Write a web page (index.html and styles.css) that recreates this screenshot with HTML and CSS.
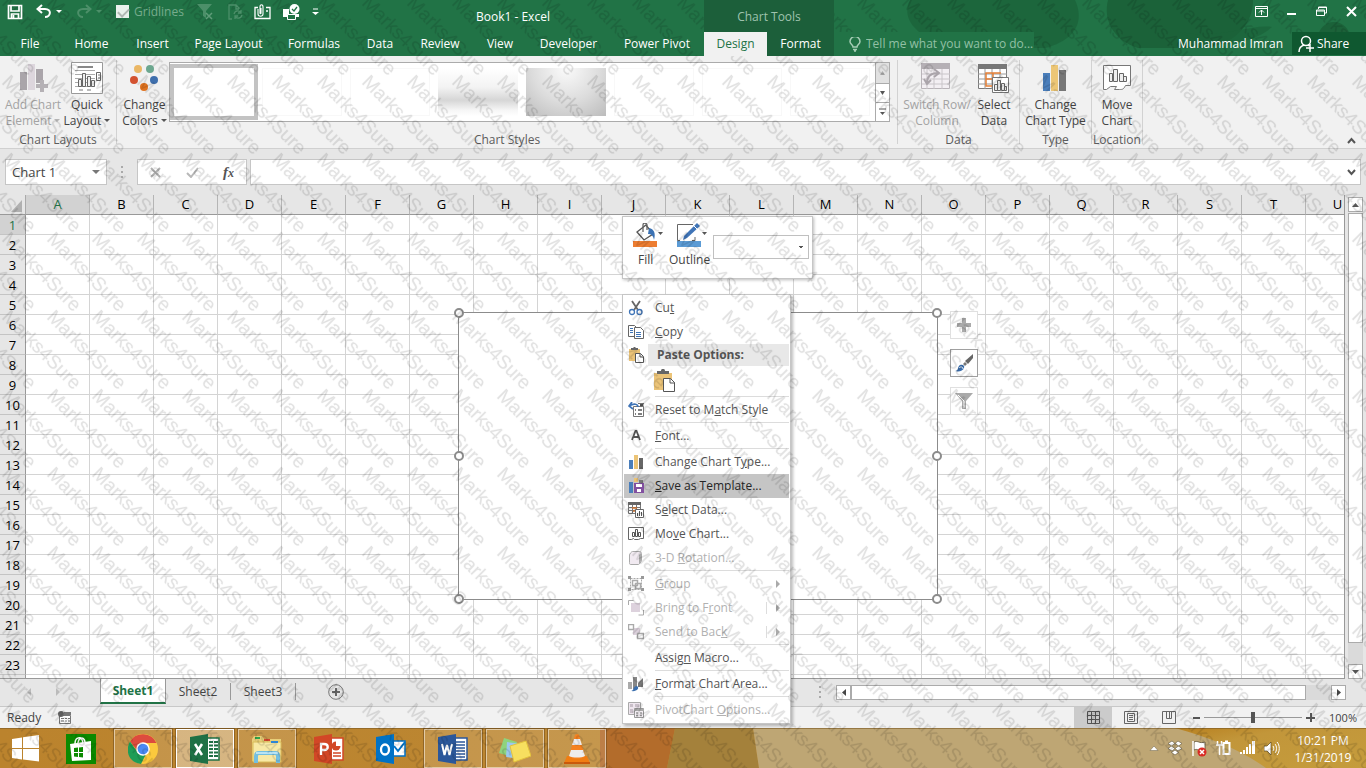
FILE: index.html
```html
<!DOCTYPE html>
<html lang="en">
<head>
<meta charset="utf-8">
<title>Book1 - Excel</title>
<link rel="stylesheet" href="styles.css">
</head>
<body>
<div class="desktop">
  <header class="top">
    <div class="titlebar">
      <div class="qat">
        <button aria-label="Save"><svg width="16" height="16" viewBox="0 0 16 16"><path d="M1.5 1.5h13v13h-13zM4 2v5h8V2M4.500 14v-4h7v4M6.500 11v3" fill="none" stroke="#fff" stroke-width="1.700"/></svg></button>
        <button aria-label="Undo" class="undo"><svg width="26" height="16" viewBox="0 0 26 16"><path d="M6 1 1.500 5 6 9M2 5h7c7 0 6 8 0 8" fill="none" stroke="#fff" stroke-width="2"/><path d="M20 6h6l-3 3z" fill="#fff"/></svg></button>
        <button aria-label="Redo" class="redo"><svg width="26" height="16" viewBox="0 0 26 16"><path d="m10 1 4.500 4L10 9M14 5H7c-7 0-6 8 0 8" fill="none" stroke="#4c8f69" stroke-width="2"/><path d="M20 6h6l-3 3z" fill="#4c8f69"/></svg></button>
        <label class="gridlines"><input type="checkbox" checked disabled>Gridlines</label>
        <button aria-label="Clear filter" class="q4"><svg width="17" height="16" viewBox="0 0 17 16"><path d="M0 0h15L9 7v7l-3-2V7z" fill="#4c8f69"/><path d="m9 9 6 6m0-6-6 6" stroke="#5f9c79" stroke-width="1.500"/></svg></button>
        <button aria-label="Refresh" class="q5"><svg width="16" height="16" viewBox="0 0 16 16"><path d="M4 15H1V1h7l3 3v1M8 1v4h3M6 10c1-4 6-4 7-1m0-3v3h-3m4 2c-1 4-6 4-7 1m0 3v-3h3" fill="none" stroke="#4c8f69" stroke-width="1.300"/></svg></button>
        <button aria-label="Attach" class="q6"><svg width="17" height="16" viewBox="0 0 17 16"><path d="M4 3.500H1v11h15v-11h-4M12 7h2" fill="none" stroke="#fff" stroke-width="1.300"/><path d="M4 5v5c0 3 5 3 5 0V3c0-3-3-3-3 0v6c0 1 1 1 1 0V4" fill="none" stroke="#fff" stroke-width="1.100"/></svg></button>
        <button aria-label="Print" class="q7"><svg width="17" height="16" viewBox="0 0 17 16"><path d="M0 5h6v5h10v3h-3v-2H4v2H0z" fill="#fff"/><path d="M4.500 10.500h8v5h-8z" fill="#217346" stroke="#fff"/><circle cx="11.500" cy="5" r="5" fill="#fff"/><path d="m9 5 2 2 3-4" fill="none" stroke="#217346" stroke-width="1.300"/></svg></button>
        <button aria-label="Customize" class="q8"><svg width="7" height="8" viewBox="0 0 7 8"><path d="M1 1h5" stroke="#fff"/><path d="M0 4h7L3.500 7z" fill="#fff"/></svg></button>
      </div>
      <h1>Book1 - Excel</h1>
      <div class="wincontrols">
        <button aria-label="Ribbon options"><svg width="13" height="11" viewBox="0 0 13 11"><path d="M.5.5h12v10H.5zM.5 2.500h12M6.500 9V4M4 6.500 6.500 4 9 6.500" fill="none" stroke="#fff"/></svg></button>
        <button aria-label="Minimize"><svg width="10" height="11" viewBox="0 0 10 11"><path d="M0 8h9" stroke="#fff" stroke-width="2"/></svg></button>
        <button aria-label="Restore"><svg width="11" height="11" viewBox="0 0 11 11"><path d="M2.500 3V1h8v6h-2M.5 4h8v5.500h-8zM.5 5h8M2.500 1.500h8" fill="none" stroke="#fff"/></svg></button>
        <button aria-label="Close"><svg width="11" height="11" viewBox="0 0 11 11"><path d="m1 1 9 9m0-9-9 9" stroke="#fff" stroke-width="2"/></svg></button>
      </div>
    </div>
    <svg class="art" width="486" height="56" viewBox="0 0 486 56"><g fill="#1b6239"><path d="M30 0h165c10 22 0 40-30 48H78C38 40 20 20 30 0z" opacity=".75"/><path d="M228 0h145c0 22-15 42-45 48h-70c-25-8-35-28-30-48z"/><circle cx="454" cy="38" r="16"/><path d="M300 32c40 8 70-8 92-5-20 18-60 24-92 5z" opacity=".7"/></g></svg>
    <nav class="tabs">
      <div class="tablist">
        <button>File</button><button>Home</button><button>Insert</button><button>Page Layout</button><button>Formulas</button><button>Data</button><button>Review</button><button>View</button><button>Developer</button><button>Power Pivot</button>
      </div>
      <div class="tools">
        <div class="toolstitle">Chart Tools</div>
        <div class="toolstabs"><button class="active">Design</button><button>Format</button></div>
      </div>
      <label class="tell"><svg width="12" height="15" viewBox="0 0 12 15"><path d="M4 10C4 8 1 7 1 4.500a4.500 4.500 0 0 1 10 0C11 7 8 8 8 10zM4 12.500h4M5 14h2" fill="none" stroke="#a5cdb5" stroke-width="1.500"/></svg><input type="text" aria-label="Tell me" placeholder="Tell me what you want to do..."></label>
      <span class="user">Muhammad Imran</span>
      <button class="share"><svg width="17" height="18" viewBox="0 0 17 18"><circle cx="8" cy="6" r="4.500" fill="none" stroke="#fff" stroke-width="1.500"/><path d="M1 17c0-4 2-6 5-7m4 0 1 1M8 13h8m-4-4v8" fill="none" stroke="#fff" stroke-width="1.500"/></svg>Share</button>
    </nav>
  </header>

  <section class="ribbon">
    <div class="group g-layouts">
      <div class="items">
        <button class="big off"><svg width="32" height="32" viewBox="0 0 32 32"><path d="M3 10h7v18H3zM19 7h7v14h-7z" fill="#aaa5aa"/><path d="M11 2h7v26h-7z" fill="#ddd6dd"/><path d="M23 18h4v4h4v4h-4v4h-4v-4h-4v-4h4z" fill="#b5b1b5"/></svg><span>Add Chart<br>Element<i class="caret"></i></span></button>
        <button class="big"><svg width="32" height="32" viewBox="0 0 32 32"><path d="M.5.500h31v31H.5z" fill="#fff" stroke="#999"/><path d="M6 5h16M4 8.500h20M4 12.500h20M4 16.500h20M4 20.500h20M4 24.500h20" stroke="#aaa" stroke-width="1"/><path d="M7 5h15" stroke="#888" stroke-width="2"/><path d="M7.500 17.500h3v7h-3zM11.500 11.500h3v13h-3zM16.500 14.500h3v10h-3zM20.500 18.500h3v6h-3z" fill="#eee" stroke="#666"/><path d="M25.500 10.500h4v8h-4z" fill="#fff" stroke="#666"/><path d="M27 13h2m-2 3h2M8 28h4m4 0h4" stroke="#777"/></svg><span>Quick<br>Layout<i class="caret"></i></span></button>
      </div>
      <h2>Chart Layouts</h2>
    </div>
    <div class="group g-styles">
      <div class="items">
        <button class="big colors"><svg width="32" height="32" viewBox="0 0 32 32"><circle cx="9" cy="7" r="4" fill="#eab765"/><circle cx="21" cy="7" r="4" fill="#6ca78f"/><circle cx="5" cy="18" r="4" fill="#d35230"/><circle cx="25" cy="18" r="4" fill="#3f6fad"/><circle cx="15" cy="25" r="4" fill="#e07320"/></svg><span>Change<br>Colors<i class="caret"></i></span></button>
        <div class="gallery">
          <div class="swatches"><i class="sw sel"></i><i class="sw"></i><i class="sw"></i><i class="sw fade"></i><i class="sw radial"></i><i class="sw"></i><i class="sw"></i><i class="sw"></i></div>
          <div class="scroller">
            <button class="dis" aria-label="Up"><svg width="5" height="4" viewBox="0 0 5 4"><path d="M0 4h5L2.500 0z" fill="#aaa"/></svg></button>
            <button aria-label="Down"><svg width="5" height="4" viewBox="0 0 5 4"><path d="M0 0h5L2.500 4z" fill="#555"/></svg></button>
            <button aria-label="More"><svg width="7" height="8" viewBox="0 0 7 8"><path d="M0 1h7" stroke="#555"/><path d="M1 4h5L3.500 7z" fill="#555"/></svg></button>
          </div>
        </div>
      </div>
      <h2>Chart Styles</h2>
    </div>
    <div class="group g-data">
      <div class="items">
        <button class="big off"><svg width="32" height="32" viewBox="0 0 32 32"><path d="M.5 2.500h28v24h-28z" fill="#f3eff3" stroke="#b9b4b9"/><path d="M0 1h29v6H0z" fill="#b5b0b5"/><path d="M6 7v20m7-20v20m8-20v20M1 12h28M1 17h28M1 22h28" stroke="#c9c5c9"/><path d="M6 21c0-7 4-10 11-10M13 7l5 4-5 4M3 17l3 5 4-4" fill="none" stroke="#aaa4aa" stroke-width="2"/></svg><span>Switch Row/<br>Column</span></button>
        <button class="big"><svg width="32" height="32" viewBox="0 0 32 32"><path d="M.5 2.500h28v24h-28z" fill="#fff" stroke="#7a7a7a"/><path d="M0 2h29v5H0z" fill="#777"/><path d="M7 7v20m7-20v20m8-20v20M0 12h29M0 17h29M0 22h29" stroke="#999"/><path d="M23 11H8v13h6M8 17h7M15 11v6" fill="none" stroke="#e58037" stroke-width="1.500"/><path d="M14.500 15.500h16v15h-16z" fill="#fff" stroke="#777"/><path d="M16.500 22.500h3v6h-3zM19.500 18.500h3v10h-3zM23.500 21.500h3v7h-3zM26.500 24.500h2v4h-2z" fill="#eee" stroke="#666"/></svg><span>Select<br>Data</span></button>
      </div>
      <h2>Data</h2>
    </div>
    <div class="group g-type">
      <div class="items">
        <button class="big"><svg width="32" height="32" viewBox="0 0 32 32"><path d="M3 11h7v18H3z" fill="#4a7ebb"/><path d="M11 3h7v26h-7z" fill="#ecc676"/><path d="M19 8h7v21h-7z" fill="#777"/></svg><span>Change<br>Chart Type</span></button>
      </div>
      <h2>Type</h2>
    </div>
    <div class="group g-loc">
      <div class="items">
        <button class="big"><svg width="32" height="32" viewBox="0 0 32 32"><path d="M2.500 3.500h27v20h-5c-2 4-3 4-6 4h-5l2-3h-6l-4 3h-3z" fill="#fff" stroke="#777"/><path d="M8.500 11.500h3v8h-3zM12.500 7.500h4v12h-4zM18.500 11.500h4v8h-4zM22.500 14.500h3v5h-3z" fill="#eee" stroke="#666"/></svg><span>Move<br>Chart</span></button>
      </div>
      <h2>Location</h2>
    </div>
    <button class="collapse" aria-label="Collapse ribbon"><svg width="9" height="7" viewBox="0 0 9 7"><path d="M1 6l3.500-4L8 6" fill="none" stroke="#555" stroke-width="2"/></svg></button>
  </section>

  <section class="formula">
    <div class="namebox"><input type="text" value="Chart 1" aria-label="Name box"><i class="caret"></i></div>
    <i class="dots"></i>
    <div class="fx">
      <button aria-label="Cancel"><svg width="11" height="11" viewBox="0 0 11 11"><path d="m1 1 9 9m0-9-9 9" stroke="#b0b0b0" stroke-width="2"/></svg></button>
      <button aria-label="Enter"><svg width="13" height="11" viewBox="0 0 13 11"><path d="m1 6 4 4 7-9" fill="none" stroke="#b8b8b8" stroke-width="2"/></svg></button>
      <button class="fxb"><em>f</em><sub>x</sub></button>
    </div>
    <div class="fbox"><input type="text" aria-label="Formula bar"><svg width="9" height="7" viewBox="0 0 9 7"><path d="M1 1l3.500 4L8 1" fill="none" stroke="#555" stroke-width="2"/></svg></div>
  </section>

  <main class="sheet">
    <div class="gridwrap">
      <table class="cells"><thead><tr id="heads"><th class="corner"><svg width="11" height="12" viewBox="0 0 11 12"><path d="M11 0v12H0z" fill="#b0b0b0"/></svg></th></tr></thead><tbody id="rows"></tbody></table>
      <div class="chart">
        <i class="h tl"></i><i class="h tr"></i><i class="h ml"></i><i class="h mr"></i><i class="h bl"></i><i class="h br"></i>
      </div>
      <div class="chartbtns">
        <button aria-label="Chart elements"><svg width="20" height="20" viewBox="0 0 20 20"><path d="M8 3h4v5h5v4h-5v5H8v-5H3V8h5z" fill="#aaa"/></svg></button>
        <button class="on" aria-label="Chart styles"><svg width="20" height="20" viewBox="0 0 20 20"><path d="M19 1v4l-5 6-3-3z" fill="#666"/><path d="m11 9 2 2-2 2-2-2z" fill="#777"/><path d="M1 18c4 0 2-4 5-6 3-1 5 1 4 3-1 3-5 4-9 3z" fill="#3b6fae"/><path d="M5 15c2-2 4-1 4 1" stroke="#fff" fill="none"/></svg></button>
        <button aria-label="Chart filters"><svg width="20" height="20" viewBox="0 0 20 20"><path d="M1 2h18l-7 8v8H8v-8z" fill="#aaa"/><path d="M4 4l6 6v7" fill="none" stroke="#fff"/></svg></button>
      </div>
    </div>
    <div class="vscroll">
      <button aria-label="Scroll up"><svg width="7" height="4" viewBox="0 0 7 4"><path d="M0 4h7L3.500 0z" fill="#555"/></svg></button>
      <i class="vthumb"></i><i class="vtrack"></i>
      <button aria-label="Scroll down"><svg width="7" height="4" viewBox="0 0 7 4"><path d="M0 0h7L3.500 4z" fill="#555"/></svg></button>
    </div>
  </main>

  <footer class="sheettabs">
    <div class="arrows"><svg width="4" height="8" viewBox="0 0 4 8"><path d="M4 0v8L0 4z" fill="#bbb"/></svg><svg width="4" height="8" viewBox="0 0 4 8"><path d="M0 0v8l4-4z" fill="#bbb"/></svg></div>
    <button class="tab cur">Sheet1</button><button class="tab">Sheet2</button><button class="tab">Sheet3</button>
    <button class="add" aria-label="New sheet"><svg width="16" height="16" viewBox="0 0 16 16"><circle cx="8" cy="8" r="7.300" fill="none" stroke="#777"/><path d="M8 4v8M4 8h8" stroke="#666" stroke-width="2"/></svg></button>
    <i class="dots hdots"></i>
    <div class="hscroll">
      <button aria-label="Scroll left"><svg width="4" height="7" viewBox="0 0 4 7"><path d="M4 0v7L0 3.500z" fill="#444"/></svg></button>
      <i class="hthumb"></i><i class="htrack"></i>
      <button aria-label="Scroll right"><svg width="4" height="7" viewBox="0 0 4 7"><path d="M0 0v7l4-3.500z" fill="#444"/></svg></button>
    </div>
  </footer>

  <div class="status">
    <span>Ready</span>
    <svg class="macro" width="14" height="13" viewBox="0 0 14 13"><path d="M1.500 4.500h11v8h-11z" fill="#fff" stroke="#777"/><path d="M6 1h7v3H6z" fill="#777"/><circle cx="3" cy="3" r="3" fill="#666"/><path d="M3 7.500h3m1 0h2m1 0h2M3 10h3m1 0h2m1 0h2" stroke="#777"/></svg>
    <div class="views">
      <button class="on" aria-label="Normal"><svg width="13" height="13" viewBox="0 0 13 13"><path d="M.5.500h12v12H.5zM4.500 0v13M8.500 0v13M0 4.500h13M0 8.500h13" fill="none" stroke="#555"/></svg></button>
      <button aria-label="Page layout"><svg width="14" height="13" viewBox="0 0 14 13"><path d="M.5.500h13v12H.5zM3.500 2.500h7v8h-7zM5 4.500h4M5 6.500h4M5 8.500h4" fill="none" stroke="#666"/></svg></button>
      <button aria-label="Page break"><svg width="14" height="13" viewBox="0 0 14 13"><path d="M.5.500h13v12H.5zM4.500 0v7.500h5V0M7.500 0v7" fill="none" stroke="#666"/></svg></button>
    </div>
    <div class="zoom"><b class="minus"></b><input type="range" min="0" max="100" value="50" aria-label="Zoom"><b class="plus"></b></div>
    <span class="pct">100%</span>
  </div>

  <div class="taskbar">
    <svg class="wall" viewBox="0 0 1366 40" preserveAspectRatio="none">
      <defs><linearGradient id="w1"><stop offset="0" stop-color="#bb832d"/><stop offset=".8" stop-color="#bd8a36"/><stop offset="1" stop-color="#b2702b"/></linearGradient><linearGradient id="w2" x2="1" y2="1"><stop offset="0" stop-color="#b8801f"/><stop offset=".3" stop-color="#c2963a"/><stop offset="1" stop-color="#c59c3c"/></linearGradient></defs>
      <path d="M0 0h1366v40H0z" fill="url(#w1)"/><path d="M600 0h75l-8 40h-67z" fill="#b36c2b"/><path d="M675 0h78l6 40h-92z" fill="#a4813b"/><path d="M753 0h450l100 40H759z" fill="#bea674"/><path d="M1175 0h191v40h-100c-25-18-55-30-91-40z" fill="url(#w2)"/><path d="M0 .5h1366" stroke="#7c5a25" opacity=".6"/>
    </svg>
    <button class="app start" aria-label="Start"><svg width="28" height="28" viewBox="0 0 28 28"><path d="m1 4 10-1.500V13H1zM12 2.300 28 0v13H12zM1 14h10v10.500L1 23zM12 14h16v12.500l-16-2z" fill="#fff"/></svg></button>
    <button class="app" aria-label="Store"><svg width="30" height="30" viewBox="0 0 30 30"><path d="M0 0h30v30H0z" fill="#0b8a00"/><path d="M4 10l21-3v19L6 27z" fill="#fff"/><path d="M9 10c0-8 7-8 8-1m-5 0c1-7 6-6 7-1" fill="none" stroke="#fff" stroke-width="1.500"/><path d="m8 14 4-.5V18H8zM13 13.400l4-.5V18h-4zM8 19h4v4l-4-.5zM13 19h4v4.500l-4-.5z" fill="#0b8a00"/></svg></button>
    <button class="app run" aria-label="Chrome"><svg width="30" height="30" viewBox="0 0 30 30"><circle cx="15" cy="15" r="15" fill="#fbc93d"/><path d="M2 7.500A15 15 0 0 1 28.500 9H15a6 6 0 0 0-5.500 8z" fill="#dd4b3e"/><path d="M2 7.500 9.500 18c2 3 5 3.500 8 3L13 30C0 28-3 16 2 7.500z" fill="#1e9d57"/><circle cx="15" cy="15" r="6.800" fill="#fff"/><circle cx="15" cy="15" r="5.300" fill="#4a8af4"/></svg></button>
    <button class="app run cur" aria-label="Excel"><svg width="30" height="30" viewBox="0 0 30 30"><path d="M15 4h14v22H15z" fill="#fff" stroke="#1f7145" stroke-width="1.500"/><path d="M19 8h4m1 0h4M19 11.500h4m1 0h4M19 15h4m1 0h4M19 18.500h4m1 0h4M19 22h4m1 0h4" stroke="#1f7145" stroke-width="1.800"/><path d="m0 3 18-3v30L0 27z" fill="#1f7145"/><path d="m5 10 7 11m0-11L5 21" stroke="#fff" stroke-width="2.500"/></svg></button>
    <button class="app run" aria-label="File Explorer"><svg width="32" height="30" viewBox="0 0 32 30"><path d="M1 5 3 2h8l2 3h17v22H1z" fill="#e8cf79"/><path d="M2 8h28v20H2z" fill="#f8e9a5" stroke="#d8bb5b"/><path d="M4 3h5v2H4z" fill="#2da44a"/><path d="M13 5h6v2h-6z" fill="#d2472f"/><path d="M20 7h7v2h-7z" fill="#2e86d6"/><path d="M5 29v-7c0-2 1-3 3-3h16c2 0 3 1 3 3v7" fill="none" stroke="#74bfe0" stroke-width="4"/><path d="M5 19h22" stroke="#b8e3f5" stroke-width="2"/></svg></button>
    <button class="app" aria-label="PowerPoint"><svg width="30" height="30" viewBox="0 0 30 30"><path d="M15 4h14v22H15z" fill="#fff" stroke="#d24726" stroke-width="1.500"/><circle cx="22" cy="12" r="4.500" fill="#d24726"/><path d="M22 12V7h5v5z" fill="#fff"/><path d="M19 19h8m-8 3h8" stroke="#d24726" stroke-width="1.500"/><path d="m0 3 18-3v30L0 27z" fill="#d24726"/><path d="M7 21V10h3c5 0 5 6 0 6H7" fill="none" stroke="#fff" stroke-width="2.300"/></svg></button>
    <button class="app" aria-label="Outlook"><svg width="30" height="30" viewBox="0 0 30 30"><path d="M15 7h14v15H15z" fill="#fff" stroke="#0072c6" stroke-width="1.500"/><path d="m18 12 4 5 7-9" fill="none" stroke="#0072c6" stroke-width="2"/><path d="m0 3 18-3v30L0 27z" fill="#0072c6"/><ellipse cx="9" cy="15.500" rx="4" ry="5" fill="none" stroke="#fff" stroke-width="2.300"/></svg></button>
    <button class="app run" aria-label="Word"><svg width="30" height="30" viewBox="0 0 30 30"><path d="M15 4h14v22H15z" fill="#fff" stroke="#2b579a" stroke-width="1.500"/><path d="M18 8h9m-9 3h9m-9 3h9m-9 3h9m-9 3h9m-9 3h9" stroke="#2b579a" stroke-width="1.400"/><path d="m0 3 18-3v30L0 27z" fill="#2b579a"/><path d="m4 10 2.500 11L9 11l2.500 10L14 10" fill="none" stroke="#fff" stroke-width="2"/></svg></button>
    <button class="app run" aria-label="Sticky Notes"><svg width="32" height="28" viewBox="0 0 32 28"><path d="m5 3 13 4-4 15L0 18z" fill="#8fd37d"/><path d="m8 7 15 2-2 15-14-2z" fill="#9cc9ee"/><path d="m11 11 16-5 5 15-17 6z" fill="#f7df5f" stroke="#e3c23c"/></svg></button>
    <button class="app run" aria-label="VLC"><svg width="28" height="30" viewBox="0 0 28 30"><path d="M4 22h20l3 7H1z" fill="#f07d12"/><path d="M12 1c0-1 4-1 4 0l6 21c-2 4-14 4-16 0z" fill="#f58220"/><path d="M11 5h6l2 6H9zM8 16h12l2 6c-4 2-12 2-16 0z" fill="#eee"/><path d="M1 29h26" stroke="#c9590b" stroke-width="2"/></svg></button>
    <div class="tray">
      <svg width="10" height="6" viewBox="0 0 10 6"><path d="M1 5.500h8L5 1z" fill="#fff" stroke="#6b6048" stroke-width=".5"/></svg>
      <svg width="16" height="16" viewBox="0 0 16 16"><path d="m5 1 3 2.500L4.500 6 1 3.500zM11 1 8 3.500 11.500 6 15 3.500zM4.500 6 8 8.500 5 11 1 8.500zM11.500 6 8 8.500l3 2.500 4-2.500zM8 10l3.500 2.500L8 15l-3.500-2.500z" fill="#fff" stroke="#5c5138" stroke-width=".6"/></svg>
      <svg width="17" height="17" viewBox="0 0 17 17"><path d="M3 2c4-2 5 2 11 0v8c-6 2-7-2-11 0z" fill="#fff" stroke="#594c31" stroke-width=".8"/><path d="M2 1v15" stroke="#fff" stroke-width="1.500"/><circle cx="11" cy="12" r="4.500" fill="#d92b24"/><path d="m9 10 4 4m0-4-4 4" stroke="#fff" stroke-width="1.500"/></svg>
      <svg width="16" height="16" viewBox="0 0 16 16"><path d="M7.500 3h6v11h-6zM9 1.500h3" fill="#b89d58" stroke="#fff" stroke-width="2"/><path d="M1.500 1v4h4V1M3.500 5v10M0 5h7" fill="none" stroke="#fff" stroke-width="1.500"/></svg>
      <svg width="16" height="14" viewBox="0 0 16 14"><path d="M0 11h2v2H0zM3 9h2v4H3zM6 6h2v7H6zM9 3h2v10H9zM12 0h3v13h-3z" fill="#fff"/></svg>
      <svg width="16" height="15" viewBox="0 0 16 15"><path d="M0 5h3l4-4v13l-4-4H0z" fill="#fff" stroke="#5a4619" stroke-width=".7"/><path d="M9 5c1 1 1 4 0 5m2-7c2 2 2 7 0 9m2-11c3 3 3 10 0 13" fill="none" stroke="#fff"/></svg>
    </div>
    <div class="clock">10:21 PM<br>1/31/2019</div>
  </div>

  <div class="minibar">
    <button class="mini"><svg width="32" height="26" viewBox="0 0 32 26"><path d="M0 18h24v6H0z" fill="#ed7d31"/><path d="m4 9 9-7 7 9-9 6z" fill="#fff" stroke="#555" stroke-width="1.300"/><path d="M10 9V2c0-3 4-2 4 0v5" fill="none" stroke="#666" stroke-width="1.300"/><path d="M16 5c5 1 7 5 5 12-1-5-3-6-6-6z" fill="#3b72b4"/><path d="M25 9h5l-2.500 3z" fill="#555"/></svg><span>Fill</span></button>
    <button class="mini"><svg width="32" height="26" viewBox="0 0 32 26"><path d="M0 18h24v6H0z" fill="#5b9bd5"/><path d="M16 1.500H.5v16H3M18 14v3.500h-3" fill="none" stroke="#666"/><path d="m6 17 1-4L20 0l3 3L10 15z" fill="#3f74b7"/><path d="m17 3 3 3" stroke="#fff"/><path d="M25 9h5l-2.500 3z" fill="#555"/></svg><span>Outline</span></button>
    <select aria-label="Chart element"><option></option></select>
  </div>

  <div class="menu" role="menu">
    <button class="mi"><svg viewBox="0 0 16 16"><path d="m4 1 6 9M12 1l-6 9" stroke="#666" stroke-width="1.800"/><circle cx="4" cy="12" r="2.500" fill="#fff" stroke="#3f74b7" stroke-width="1.300"/><circle cx="11.500" cy="12" r="2.500" fill="#fff" stroke="#3f74b7" stroke-width="1.300"/></svg><span>Cu<u>t</u></span></button>
    <button class="mi"><svg viewBox="0 0 16 16"><path d="M.5 1.500h6l2 2v9h-8z" fill="#fff" stroke="#666"/><path d="M6.500 3.500h6l3 3v8h-9z" fill="#fff" stroke="#666"/><path d="M2 4.500h3M2 6.500h3M2 8.500h3M8 8.500h5m-5 2h5m-5 2h5" stroke="#3f74b7"/></svg><span><u>C</u>opy</span></button>
    <div class="paste"><svg viewBox="0 0 16 16"><path d="M1 2h11v12H1z" fill="#ecc478"/><path d="M3 3V1h2l1-1h1l1 1h2v2z" fill="#666"/><path d="M7.500 6.500h5l3 3v6h-8z" fill="#fff" stroke="#555"/><path d="M12 6.500V10h3" fill="none" stroke="#555"/></svg><b>Paste Options:</b></div>
    <button class="pasteicon" aria-label="Paste"><svg width="22" height="24" viewBox="0 0 22 24"><path d="M0 4h18v17H0z" fill="#ecc478"/><path d="M3 5V2h4c0-3 4-3 4 0h4v3z" fill="#666"/><path d="M9.500 9.500h7l4 4v9h-11z" fill="#fff" stroke="#555"/><path d="M16 9.500V14h5" fill="none" stroke="#555"/></svg></button>
    <hr>
    <button class="mi"><svg viewBox="0 0 16 16"><path d="M10 1.500h6v5M5.500 4.500h10v10h-10z" fill="#fff" stroke="#777"/><path d="M12 2h3v2h-3z" fill="#555"/><path d="M10 8h4m-4 4h4M7 8h1m-1 4h1" stroke="#555" stroke-width="1.500"/><path d="M4 0 1 4l4 3M1 4c5-3 9-2 9 1" fill="none" stroke="#3f74b7" stroke-width="1.700"/></svg><span>Reset to M<u>a</u>tch Style</span></button>
    <hr>
    <button class="mi"><svg viewBox="0 0 16 16"><path d="m4 12 3.500-9h1L12 12M5.500 9h5" fill="none" stroke="#555" stroke-width="1.800"/></svg><span><u>F</u>ont...</span></button>
    <hr>
    <button class="mi"><svg viewBox="0 0 16 16"><path d="M1 6h4v9H1z" fill="#4a7ebb"/><path d="M6 1h4v14H6z" fill="#ecc476"/><path d="M11 4h4v11h-4z" fill="#666"/></svg><span>Change Chart T<u>y</u>pe...</span></button>
    <button class="mi hot"><svg viewBox="0 0 16 16"><path d="M1 4h4v11H1z" fill="#4a7ebb"/><path d="M6 0h4v4H6z" fill="#ecc476"/><path d="M11 2h4v3h-4z" fill="#777"/><path d="M6 5h10v10H6z" fill="#8250a0"/><path d="M8 6h6v3H8zM9 11h4v3H9z" fill="#fff"/></svg><span><u>S</u>ave as Template...</span></button>
    <button class="mi"><svg viewBox="0 0 16 16"><path d="M.5 1.500h12v10H.5zM4.500 2v9M8.500 2v9M1 5.500h11M1 8.500h11" fill="#fff" stroke="#777"/><path d="M0 0h13v3H0z" fill="#666"/><path d="M4 6h5M5 9h3" stroke="#e58037" stroke-width="1.500"/><path d="M7.500 7.500h8v8h-8z" fill="#fff" stroke="#666"/><path d="M9.500 14v-3m2 3V9m2 5v-4" stroke="#555"/></svg><span>S<u>e</u>lect Data...</span></button>
    <button class="mi"><svg viewBox="0 0 16 16"><path d="M.5 1.500h15v11h-3l-2 1h-4l-1-1-2 1h-3z" fill="#fff" stroke="#666"/><path d="M4.500 6.500h2v4h-2zM7.500 3.500h2v7h-2zM10.500 6.500h2v4h-2z" fill="#fff" stroke="#555"/></svg><span>Mo<u>v</u>e Chart...</span></button>
    <button class="mi off"><svg viewBox="0 0 16 16"><path d="M1.500 5c0-1 2-3.500 3-3.500h7c1 0 2 1 2 2V10c0 1-2 4.500-3 4.500h-8c-1 0-1-1-1-2z" fill="#f1eaf1" stroke="#aaa"/><path d="m11 5 2-2v8l-2 3z" fill="#aaa"/></svg><span>3-D <u>R</u>otation...</span></button>
    <hr>
    <button class="mi off"><svg viewBox="0 0 16 16"><path d="M2.500 2.500h11v11h-11z" fill="none" stroke="#aaa" stroke-dasharray="2 1"/><path d="M0 0h3v3H0zM13 0h3v3h-3zM0 12h3v3H0zM13 12h3v3h-3z" fill="#999"/><path d="M4.500 4.500h5v5h-5zM7.500 7.500h5v5h-5z" fill="none" stroke="#aaa" stroke-width="1.500"/></svg><span><u>G</u>roup</span><i class="sub"></i></button>
    <button class="mi off"><svg viewBox="0 0 16 16"><path d="M.5 5V.500h5M15.500 10v5h-5" fill="none" stroke="#aaa"/><path d="M3 3h9v9H3z" fill="#ddd2dd"/></svg><span>Bring to F<u>r</u>ont</span><i class="sub split"></i></button>
    <button class="mi off"><svg viewBox="0 0 16 16"><path d="M5 4h7v7H5z" fill="#ddd2dd"/><path d="M.5.500h5v5h-5zM9.500 9.500h6v5h-6z" fill="#fff" stroke="#aaa" stroke-width="1.400"/></svg><span>Send to Bac<u>k</u></span><i class="sub split"></i></button>
    <hr>
    <button class="mi"><svg viewBox="0 0 16 16"></svg><span>Assig<u>n</u> Macro...</span></button>
    <hr>
    <button class="mi"><svg viewBox="0 0 16 16"><path d="M0 6h4v7H0z" fill="#aaa"/><path d="M5 1h4v12H5z" fill="#888"/><path d="M10 7l5-5v9h-5z" fill="#777"/><path d="M3 15c3 0 2-5 6-5 3 2 0 6-6 5z" fill="#3b6fae"/></svg><span><u>F</u>ormat Chart Area...</span></button>
    <hr>
    <button class="mi off"><svg viewBox="0 0 16 16"><path d="M.5.500h12v12H.5z" fill="#eee6ee" stroke="#aaa"/><path d="M2 2h3v3H2zM7 2h4v3H7zM2 7h3v4H2z" fill="#c9bfc9"/><path d="M6.500 6.500h9v9h-9z" fill="#f4eff4" stroke="#999"/><path d="M6 7h10v2H6z" fill="#aaa"/><path d="M8 11h2m2 0h2m-6 2.500h2m2 0h2" stroke="#999" stroke-width="1.500"/></svg><span>PivotChart <u>O</u>ptions...</span></button>
  </div>

  <svg class="marks" aria-hidden="true">
    <defs><pattern id="mk" width="45" height="157" patternUnits="userSpaceOnUse">
      <g class="mark">
        <text transform="translate(1 -74)rotate(45)">Marks4Sure</text><text transform="translate(-44 -74)rotate(45)">Marks4Sure</text>
        <text transform="translate(1 4)rotate(45)">Marks4Sure</text><text transform="translate(-44 4)rotate(45)">Marks4Sure</text>
        <text transform="translate(1 83)rotate(45)">Marks4Sure</text><text transform="translate(-44 83)rotate(45)">Marks4Sure</text>
        <text transform="translate(1 161)rotate(45)">Marks4Sure</text>
      </g>
    </pattern></defs>
    <rect width="100%" height="100%" fill="url(#mk)"/>
  </svg>
</div>
<script src="grid.js"></script>
</body>
</html>
```
FILE: grid.js
```js
const heads = document.getElementById('heads');
const rows = document.getElementById('rows');
const letters = 'ABCDEFGHIJKLMNOPQRSTU'.split('');
letters.forEach((l, i) => {
  const th = document.createElement('th');
  th.textContent = l;
  if (i === 0) th.className = 'cur';
  heads.appendChild(th);
});
for (let r = 1; r <= 24; r++) {
  const tr = document.createElement('tr');
  const th = document.createElement('th');
  if (r < 24) th.textContent = r;
  if (r === 1) th.className = 'cur';
  tr.appendChild(th);
  letters.forEach(() => tr.appendChild(document.createElement('td')));
  rows.appendChild(tr);
}
```
FILE: styles.css
```css
* { box-sizing: border-box; }
body { margin: 0; font: 12px/16px "Open Sans", "Noto Sans", sans-serif; color: #444; }
button { font: inherit; color: inherit; background: none; border: 0; padding: 0; margin: 0; }
input, select { font: inherit; color: inherit; margin: 0; }
svg { display: block; flex: none; }
h1, h2 { margin: 0; font: inherit; }
i { font-style: normal; }

.desktop { position: relative; display: flex; flex-direction: column; height: 100vh; overflow: hidden; background: #e6e6e6; }
.caret { display: inline-block; border: 3px solid transparent; border-top-color: #555; border-bottom: 0; margin: 0 0 3px 3px; }

.top { position: relative; background: #217346; color: #fff; height: 56px; display: flex; flex-direction: column; }
.art { position: absolute; right: 0; top: 0; }
.titlebar { position: relative; z-index: 1; height: 32px; display: flex; align-items: center; }
.qat { display: flex; align-items: center; height: 24px; margin-bottom: 9px; padding-left: 7px; width: 476px; }
.undo { margin-left: 13px; }
.redo { margin-left: 14px; }
.gridlines { display: flex; align-items: center; gap: 5px; margin-left: 14px; color: #76ab8c; }
.gridlines input { appearance: none; width: 13px; height: 13px; background: #e9f1ec; }
.gridlines input::before { content: ""; display: block; width: 9px; height: 5px; border: solid #b0b8b3; border-width: 0 0 2px 2px; rotate: -45deg; margin: 3px 2px; }
.q4 { margin-left: 13px; }
.q5 { margin-left: 14px; }
.q6 { margin-left: 10px; }
.q7, .q8 { margin-left: 12px; }
.titlebar h1 { padding-top: 2px; }
.wincontrols { display: flex; align-items: center; gap: 19px; margin: 0 9px 9px auto; }
.tabs { position: relative; z-index: 1; height: 24px; display: flex; }
.tablist { display: grid; grid-template-columns: 60px 63px 59px 93px 78px 54px 66px 54px 83px 94px; }
.tools { display: flex; flex-direction: column; width: 130px; margin-top: -32px; background: #1c5f3a; }
.toolstitle { height: 32px; line-height: 34px; text-align: center; color: #9fc3ae; }
.toolstabs { flex: 1; display: grid; grid-template-columns: 63px 67px; }
.toolstabs .active { background: #f1f1f1; color: #217346; }
.tell { display: flex; align-items: center; gap: 5px; width: 200px; padding-left: 15px; background: #217346; }
.tell input { flex: 1; min-width: 0; border: 0; padding: 0; background: none; outline: 0; }
.tell input::placeholder { color: #92c0a5; opacity: 1; }
.user { margin-left: auto; padding: 4px 9px 0; }
.share { display: flex; align-items: center; gap: 2px; width: 74px; padding-left: 6px; margin-bottom: 1px; background: #0f5830; }

.ribbon { position: relative; display: flex; height: 93px; background: #f1f1f1; border-bottom: 1px solid #d0d0d0; padding-top: 4px; }
.group { display: flex; flex-direction: column; height: 84px; border-right: 1px solid #d2d2d2; }
.items { display: flex; flex: none; justify-content: center; height: 70px; }
.group h2 { height: 14px; line-height: 20px; text-align: center; color: #5c5c5c; }
.g-layouts { width: 117px; }
.g-layouts .items { justify-content: flex-start; padding-left: 3px; }
.g-layouts .big { width: 60px; }
.g-layouts .big + .big { width: 48px; }
.g-styles { flex: 0 1 781px; }
.g-data { width: 122px; }
.g-data .items { justify-content: flex-start; padding-left: 2px; }
.g-data .big { width: 74px; }
.g-data .big + .big { width: 40px; }
.g-type { width: 72px; }
.g-loc { width: 51px; }
.big { display: flex; flex-direction: column; align-items: center; white-space: nowrap; padding-top: 2px; }
.big svg { margin-bottom: 3px; }
.off { color: #a3a3a3; }
.off .caret { border-top-color: #b5b5b5; }
.colors { width: 52px; padding-left: 3px; }
.gallery { flex: 1; display: flex; height: 60px; margin: 2px 7px 0 0; background: #fff; border: 1px solid #ababab; }
.swatches { flex: 1; display: flex; gap: 8px; padding: 5px 0 0 4px; overflow: hidden; }
.sw { width: 80px; height: 48px; flex: none; border: 1px solid #f8f8f8; }
.sw.sel { border: 0; outline: 4px solid #c3c3c3; }
.sw.fade { border: 0; background: linear-gradient(#fff, #f3f3f3 40%, #d6d6d6 67%, #f6f6f6 88%, #fff); }
.sw.radial { border: 0; background: radial-gradient(circle at 50% 0, #fbfbfb, #dcdcdc 55%, #bcbcbc); }
.scroller { display: grid; grid-template-rows: 20px 19px 1fr; width: 14px; border-left: 1px solid #ababab; }
.scroller button { display: grid; place-items: center; }
.scroller button + button { border-top: 1px solid #ababab; }
.scroller .dis { background: #e1e1e1; }
.collapse { margin: auto 10px 4px auto; }

.formula { display: flex; align-items: flex-start; height: 46px; padding: 10px 5px 0; }
.namebox, .fx, .fbox { display: flex; align-items: center; height: 26px; background: #fff; border: 1px solid #c6c6c6; }
.namebox { width: 102px; padding: 0 6px; }
.namebox input { width: 80px; border: 0; padding: 0; font-size: 13px; background: none; outline: 0; }
.namebox .caret { border-width: 4px 4px 0; margin: 0; flex: none; border-top-color: #777; }
.dots { width: 2px; height: 12px; margin: 7px 14px 0 14px; background: repeating-linear-gradient(#aaa 0 2px, transparent 2px 5px); }
.fx { width: 110px; padding: 0 12px; justify-content: space-between; }
.fxb { font: italic bold 15px/20px "Liberation Serif", serif; color: #555; }
.fxb sub { font-size: 12px; line-height: 1px; vertical-align: baseline; }
.fbox { flex: 1; margin-left: 3px; padding-right: 4px; }
.fbox input { flex: 1; border: 0; padding: 0 4px; background: none; outline: 0; }

.sheet { flex: 1; display: flex; min-height: 0; }
.gridwrap { position: relative; flex: 1; overflow: hidden; border-bottom: 1px solid #999; border-right: 1px solid #999; }
.cells { width: 1370px; table-layout: fixed; border-collapse: separate; border-spacing: 0; background: #fff; font-size: 13px; }
.cells th { font-weight: 400; color: #000; background: #e6e6e6; padding: 0; }
.cells thead th { height: 20px; line-height: 19px; width: 64px; border-right: 1px solid #b5b5b5; border-bottom: 1px solid #999; }
.cells thead th.corner { width: 26px; padding: 2px 3px 0 11px; border-right-color: #aaa; }
.cells tbody th { height: 20px; padding: 2px 0 0; line-height: 17px; border-right: 1px solid #999; border-bottom: 1px solid #c4c4c4; }
.cells td { padding: 0; border-right: 1px solid #d4d4d4; border-bottom: 1px solid #d4d4d4; }
.cells th.cur { background: #d2d2d2; color: #217346; }
.chart { position: absolute; left: 458px; top: 117px; width: 480px; height: 288px; background: #fff; border: 1px solid #8c8c8c; }
.h { position: absolute; width: 10px; height: 10px; border: 2px solid #8c8c8c; border-radius: 50%; background: #fff; translate: -50% -50%; }
.tl { left: 0; top: 0; } .tr { left: 100%; top: 0; }
.ml { left: 0; top: 50%; } .mr { left: 100%; top: 50%; }
.bl { left: 0; top: 100%; } .br { left: 100%; top: 100%; }
.chartbtns { position: absolute; left: 950px; top: 116px; display: grid; gap: 10px; }
.chartbtns button { display: grid; place-items: center; width: 28px; height: 28px; background: #fff; border: 1px solid #e0e0e0; }
.chartbtns .on { border-color: #a0a0a0; }
.vscroll { display: flex; flex-direction: column; width: 21px; padding: 2px 3px 0 3px; }
.vscroll button, .hscroll button { display: grid; place-items: center; width: 15px; height: 15px; flex: none; background: #fff; border: 1px solid #ababab; }
.vthumb { flex: 1; margin-top: 1px; background: #fff; border: 1px solid #ababab; }
.vtrack { height: 21px; background: #dadada; }

.sheettabs { display: flex; align-items: flex-start; height: 28px; border-bottom: 1px solid #c8c8c8; }
.arrows { display: flex; gap: 25px; width: 100px; padding: 9px 0 0 27px; }
.tab { height: 17px; width: 65px; margin-top: 4px; border-right: 1px solid #999; }
.tab.cur { height: 25px; width: 66px; margin-top: 0; background: #fff; color: #217346; font-weight: 700; border: solid #999; border-width: 0 1px; border-bottom: 2px solid #217346; }
.add { margin: 5px auto 0 32px; }
.hdots { margin: 7px 15px 0 0; }
.hscroll { display: flex; width: 510px; height: 15px; margin: 6px 20px 0 0; background: #dadada; }
.hthumb { flex: 1; background: #fff; border: 1px solid #ababab; }
.htrack { width: 25px; }

.status { display: flex; align-items: center; height: 21px; padding: 0 9px 0 7px; background: #f1f1f1; }
.macro { margin-left: 17px; }
.views { display: flex; height: 21px; margin-left: auto; }
.views button { display: grid; place-items: center; width: 38px; }
.views .on { background: #cbcbcb; }
.zoom { display: flex; align-items: center; gap: 4px; margin: 0 14px 0 5px; }
.minus { width: 7px; height: 2px; background: #555; }
.plus { width: 9px; height: 9px; background: linear-gradient(#555, #555) 50%/9px 2px no-repeat, linear-gradient(#555, #555) 50%/2px 9px no-repeat; }
.zoom input { appearance: none; width: 98px; height: 11px; background: linear-gradient(#999, #999) center/100% 1px no-repeat; }
.zoom input::-webkit-slider-thumb { appearance: none; width: 4px; height: 11px; background: #555; }
.pct { font-size: 11px; }

.taskbar { position: relative; display: flex; height: 40px; color: #fff; }
.wall { position: absolute; width: 100%; height: 100%; }
.app { position: relative; display: grid; place-items: center; width: 58px; height: 39px; margin: 1px 2px 0; }
.start { width: 46px; }
.run { border: 1px solid #ffffff80; background: #ffffff22; outline: 1px solid #6a4a1c88; }
.run.cur { border-color: #fff; background: #ffffff66; }
.tray { position: relative; display: flex; align-items: center; gap: 8px; margin-left: auto; padding-right: 18px; }
.clock { position: relative; display: flex; width: 50px; margin-right: 18px; padding-top: 4px; justify-content: center; text-align: center; white-space: nowrap; line-height: 17px; }

.minibar { position: absolute; left: 622px; top: 216px; display: flex; width: 191px; height: 63px; padding: 6px 3px 0 8px; background: #fff; border: 1px solid #c6c6c6; box-shadow: 1px 1px 3px #0004; }
.mini { display: flex; flex-direction: column; width: 43px; text-align: left; gap: 3px; padding-left: 2px; }
.mini:first-child span { padding-left: 5px; }
.mini + .mini { width: 39px; padding: 0; }
.mini + .mini svg { margin-left: 3px; }
.mini + .mini span { margin-left: -5px; }
.minibar select { appearance: none; width: 96px; height: 24px; margin-top: 12px; border: 1px solid #c0c0c0; border-radius: 0; background: linear-gradient(to top right, transparent 50%, #555 0) 84px 10px/3px 3px no-repeat, linear-gradient(to top left, transparent 50%, #555 0) 87px 10px/3px 3px no-repeat, #fff; }

.menu { position: absolute; left: 622px; top: 294px; width: 169px; padding: 1px; background: #fff; border: 1px solid #c6c6c6; box-shadow: 2px 2px 3px #0004; display: flex; flex-direction: column; color: #555; }
.mi { display: flex; align-items: center; height: 24px; gap: 11px; padding-left: 4px; white-space: nowrap; flex: none; }
.mi svg, .paste svg { width: 16px; height: 16px; }
.mi.hot { background: #c5c5c5; color: #262626; }
.mi.off { color: #b1b1b1; }
.menu hr { width: 134px; margin: 0 0 1px auto; border: 0; height: 1px; background: #dcdcdc; }
.paste { display: flex; align-items: center; gap: 4px; height: 22px; padding-left: 4px; flex: none; }
.paste b { flex: 1; line-height: 22px; padding-left: 9px; background: #e8e8e8; font-weight: 700; }
.pasteicon { height: 30px; padding-left: 30px; flex: none; }
.sub { margin: 0 9px 0 auto; border: 4px solid transparent; border-left-color: #aaa; border-right: 0; }
.sub.split { position: relative; }
.sub.split::before { content: ""; position: absolute; left: -14px; top: -6px; height: 12px; border-left: 1px solid #ddd; }

.marks { position: absolute; inset: 0; width: 100%; height: 100%; pointer-events: none; }
.mark { font: 19px "Liberation Sans", sans-serif; fill: #000; fill-opacity: .1; stroke: #000; stroke-opacity: .02; stroke-width: 1px; }
```
